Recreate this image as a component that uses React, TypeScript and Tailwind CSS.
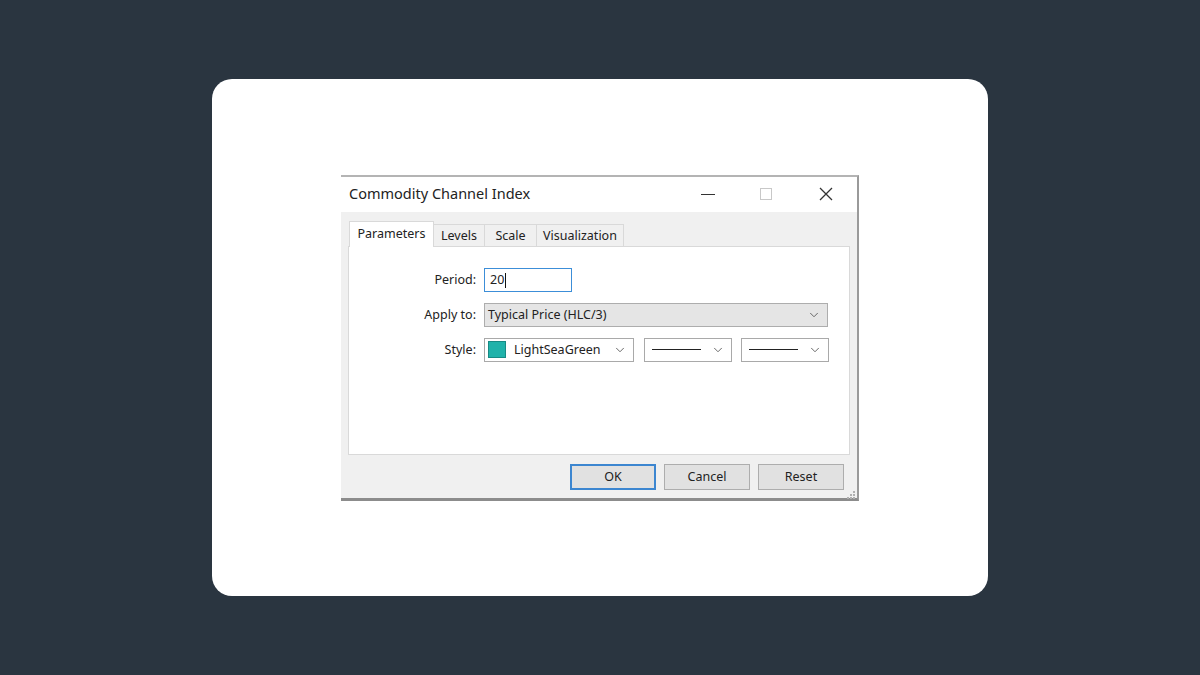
import { ChevronDown } from "lucide-react";

function Chevron() {
  return <ChevronDown className="w-[14px] h-[14px] text-[#555]" strokeWidth={1.5} />;
}

function LineSelect() {
  return (
    <div className="w-[88px] h-[24px] border border-[#a9a9a9] bg-white flex items-center pl-[7px] pr-[6px] gap-[10px]">
      <div className="flex-1 h-px bg-[#222]" />
      <Chevron />
    </div>
  );
}

export default function App() {
  return (
    <div
      className="w-full h-[675px] bg-[#2a3540] flex items-center justify-center"
      style={{ fontFamily: '"Noto Sans", "Open Sans", sans-serif' }}
    >
      <div className="w-[776px] h-[517px] bg-white rounded-[20px] flex items-center justify-center">
        <div className="w-[518px] h-[326px] flex flex-col border-t-2 border-t-[#b4b4b4] border-r-2 border-r-[#9a9a9a] border-b-[3px] border-b-[#8c8c8c] bg-[#f0f0f0]">
          {/* title bar */}
          <div className="h-[35px] bg-white flex items-center pl-[8px] shrink-0">
            <div className="flex-1 text-[14.5px] text-[#222]">Commodity Channel Index</div>
            <div className="w-[14px] h-px bg-[#333] mr-[45px]" />
            <div className="w-[12px] h-[12px] border border-[#c8c8c8] mr-[47px]" />
            <svg width="14" height="14" viewBox="0 0 14 14" className="mr-[24px]">
              <path d="M1 1 L13 13 M13 1 L1 13" stroke="#333" strokeWidth="1.3" />
            </svg>
          </div>

          {/* body */}
          <div className="flex-1 flex flex-col px-[7px] pt-[9px]">
            <div className="flex items-end text-[12.5px] text-[#222] pl-[1px] h-[25px]">
              <div className="w-[85px] h-[26px] bg-white border border-b-0 border-[#d9d9d9] flex items-center justify-center pt-px relative top-px z-10">
                Parameters
              </div>
              <div className="w-[51px] h-[22px] border border-b-0 border-l-0 border-[#d9d9d9] flex items-center justify-center pt-[2px]">Levels</div>
              <div className="w-[52px] h-[22px] border border-b-0 border-l-0 border-[#d9d9d9] flex items-center justify-center pt-[2px]">Scale</div>
              <div className="w-[87px] h-[22px] border border-b-0 border-l-0 border-[#d9d9d9] flex items-center justify-center pt-[2px]">Visualization</div>
            </div>
            <div className="h-[209px] bg-white border border-[#d9d9d9] pt-[21px] flex flex-col gap-[11px] text-[12.5px] text-[#222]">
              <div className="flex items-center">
                <div className="w-[127px] text-right pt-[2px]">Period:</div>
                <div className="ml-[8px] w-[88px] h-[24px] border border-[#3c8ed8] bg-white flex items-center pl-[5px] pt-[2px]">
                  20<span className="w-px h-[15px] bg-[#111] ml-px" />
                </div>
              </div>
              <div className="flex items-center">
                <div className="w-[127px] text-right pt-[2px]">Apply to:</div>
                <div className="ml-[8px] w-[344px] h-[24px] border border-[#adadad] bg-[#e5e5e5] flex items-center pl-[3px] pr-[6px]">
                  <span className="flex-1 pt-[2px]">Typical Price (HLC/3)</span>
                  <Chevron />
                </div>
              </div>
              <div className="flex items-center">
                <div className="w-[127px] text-right pt-[2px]">Style:</div>
                <div className="ml-[8px] w-[150px] h-[24px] border border-[#a9a9a9] bg-white flex items-center pl-[3px] pr-[6px]">
                  <div className="w-[18px] h-[17px] bg-[#20b2aa] border border-[#178a84]" />
                  <span className="flex-1 ml-[8px] pt-[2px]">LightSeaGreen</span>
                  <Chevron />
                </div>
                <div className="ml-[10px]">
                  <LineSelect />
                </div>
                <div className="ml-[9px]">
                  <LineSelect />
                </div>
              </div>
            </div>

            {/* buttons */}
            <div className="flex justify-end gap-[8px] pr-[6px] pt-[9px] text-[12.5px] text-[#222] relative">
              <div className="w-[86px] h-[26px] border-2 border-[#3c86d0] bg-[#e1e1e1] flex items-center justify-center pt-[2px]">OK</div>
              <div className="w-[86px] h-[26px] border border-[#adadad] bg-[#e1e1e1] flex items-center justify-center pt-[2px]">Cancel</div>
              <div className="w-[86px] h-[26px] border border-[#adadad] bg-[#e1e1e1] flex items-center justify-center pt-[2px]">Reset</div>
              <svg width="10" height="10" viewBox="0 0 10 10" className="absolute right-[-6px] bottom-[-10px]">
                <g fill="#b0b0b0">
                  <rect x="7" y="1" width="2" height="2" />
                  <rect x="4" y="4" width="2" height="2" />
                  <rect x="7" y="4" width="2" height="2" />
                  <rect x="1" y="7" width="2" height="2" />
                  <rect x="4" y="7" width="2" height="2" />
                  <rect x="7" y="7" width="2" height="2" />
                </g>
              </svg>
            </div>
          </div>
        </div>
      </div>
    </div>
  );
}
